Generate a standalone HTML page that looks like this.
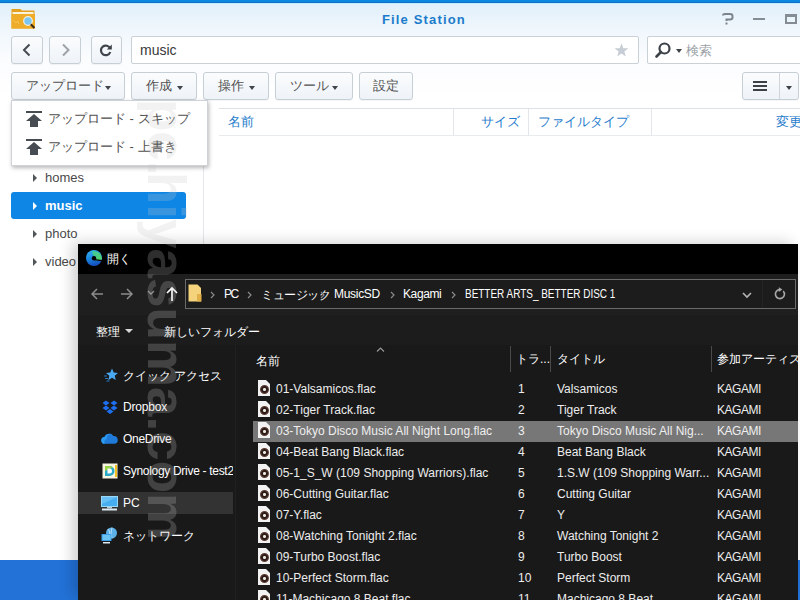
<!DOCTYPE html>
<html><head><meta charset="utf-8">
<style>
*{margin:0;padding:0;box-sizing:border-box}
html,body{width:800px;height:600px;overflow:hidden;background:#2272d8;font-family:"Liberation Sans",sans-serif}
.a{position:absolute;white-space:nowrap}
#fs{position:absolute;left:0;top:0;width:800px;height:560px;background:linear-gradient(#ddeefa 0px,#eef6fc 25px,#fbfcfe 60px,#fff 100px);overflow:hidden}
#topbar{left:0;top:0;width:800px;height:4px;background:linear-gradient(#0a86e0 0,#0a86e0 2px,#0b6fc4 2px,#0b6fc4 3px,#bfeefe 3px,#bfeefe 4px)}
.title{left:382px;top:12px;font-weight:bold;font-size:13px;letter-spacing:1.15px;color:#1b7bcb}
.btn{position:absolute;border:1px solid #c6ced6;border-radius:3px;background:linear-gradient(#fbfcfd,#eef3f8);box-shadow:0 1px 0 rgba(0,0,0,.04)}
.tb{top:72px;height:28px;font-size:13px;color:#505050;line-height:26px;text-align:left;padding-left:14px;white-space:nowrap}
.caret{position:absolute;top:13px;width:0;height:0;border-left:3.5px solid transparent;border-right:3.5px solid transparent;border-top:4px solid #3f454b}
.input{position:absolute;background:#fff;border:1px solid #c9d0d6;border-radius:2px}
.tree{font-size:13px;color:#4a4a4a}
.tri{position:absolute;width:0;height:0;border-top:4px solid transparent;border-bottom:4px solid transparent;border-left:4px solid #50555a}
.hdr{font-size:13px;color:#1f7ccc;top:113px}
.vline{position:absolute;width:1px;background:#e2e6ea}
#dd{left:11px;top:100px;width:197px;height:66px;background:#fff;border:1px solid #cfd3d7;box-shadow:1px 2px 4px rgba(0,0,0,.28)}
.mi{position:absolute;left:36px;font-size:13px;color:#505050}
/* explorer */
#ex{left:78px;top:244px;width:720px;height:356px;background:#191919;overflow:hidden;box-shadow:-6px -2px 14px -1px rgba(0,0,0,.2)}
.w{color:#fff;font-size:12px}
.row{position:absolute;left:175px;width:545px;height:21px;font-size:12px;color:#ededed;line-height:21px}
.row span{position:absolute;top:0}
.row .k{left:464px;letter-spacing:-0.45px}
.fi{position:absolute;left:5px;top:1px;width:12px;height:16px;background:#f2f2f2;clip-path:polygon(0 0,8px 0,12px 4px,12px 16px,0 16px)}
.fi:after{content:"";position:absolute;left:1.5px;top:4.5px;width:9px;height:9px;border-radius:50%;background:radial-gradient(circle,#f0e8e0 0 1.2px,#2a1c18 1.8px 3px,#5a3a30 3.5px 4.5px,transparent 4.6px)}
.nav{position:absolute;left:26px;font-size:12px;color:#fff}
.wm{position:absolute;transform-origin:0 0;transform:rotate(90deg);font-size:53px;font-weight:bold;color:rgb(200,200,200);opacity:.23;white-space:nowrap;line-height:62px}
</style></head><body>
<div id="fs">
  <div class="a" id="topbar"></div>
  <!-- folder icon -->
  <svg class="a" style="left:11px;top:8px" width="25" height="22" viewBox="0 0 25 22">
    <path d="M0.5 1h9l1.5 1.5h12.5v18H0.5z" fill="#e4a020"/>
    <path d="M1.5 4h21v2h-21z" fill="#fbf2dc"/>
    <path d="M0.5 6h23.5v14.5H0.5z" fill="#eeac28"/>
    <path d="M2 12l3 3 2-2 1 3" fill="none" stroke="#f6c860" stroke-width=".8"/>
    <circle cx="17" cy="13" r="4.3" fill="#7cc6f4" stroke="#f4f0e0" stroke-width="1.2"/>
    <path d="M19.8 16.2l3.6 3.8" stroke="#3a2a1a" stroke-width="2"/>
  </svg>
  <div class="a title">File Station</div>
  <!-- window controls -->
  <svg class="a" style="left:722px;top:13px" width="12" height="12" viewBox="0 0 12 12"><path d="M1 2.5Q1 1 3 1h5q2.5 0 2.5 2.2v1.3q0 2-2.5 2H4.5v1.5" fill="none" stroke="#7c838b" stroke-width="2"/><path d="M3.5 9.5h2v2h-2z" fill="#7c838b"/></svg>
  <div class="a" style="left:753px;top:18px;width:12px;height:2px;background:#858c94"></div>
  <div class="a" style="left:785px;top:14px;width:12px;height:10px;border:2px solid #858c94;border-top-width:3px"></div>

  <!-- nav buttons -->
  <div class="btn" style="left:11px;top:36px;width:32px;height:28px"></div>
  <svg class="a" style="left:22px;top:43px" width="10" height="14"><path d="M7.5 1.5L2 7l5.5 5.5" fill="none" stroke="#464b51" stroke-width="2"/></svg>
  <div class="btn" style="left:49px;top:36px;width:32px;height:28px"></div>
  <svg class="a" style="left:61px;top:43px" width="10" height="14"><path d="M2 1.5L7.5 7 2 12.5" fill="none" stroke="#9ea3a8" stroke-width="2"/></svg>
  <div class="btn" style="left:91px;top:36px;width:31px;height:28px"></div>
  <svg class="a" style="left:98px;top:42px" width="16" height="16" viewBox="0 0 16 16"><path d="M12.2 6.5A4.8 4.8 0 1 0 12.3 10" fill="none" stroke="#3f444a" stroke-width="2.2"/><path d="M13.8 2.5v5h-5z" fill="#3f444a"/></svg>

  <div class="input" style="left:131px;top:36px;width:508px;height:28px"></div>
  <div class="a" style="left:140px;top:42px;font-size:14px;color:#383838">music</div>
  <svg class="a" style="left:614px;top:43px" width="15" height="14" viewBox="0 0 15 14"><path d="M7.5 0.3l1.75 4.9 5.2.15-4.1 3.2 1.45 5L7.5 10.6 3.2 13.55l1.45-5L.55 5.35l5.2-.15z" fill="#c6cdd4"/></svg>

  <div class="input" style="left:647px;top:36px;width:160px;height:28px"></div>
  <svg class="a" style="left:654px;top:41px" width="18" height="18" viewBox="0 0 18 18"><circle cx="10.5" cy="7.5" r="5" fill="none" stroke="#3d4248" stroke-width="2.2"/><path d="M7 11l-4.5 4.5" stroke="#3d4248" stroke-width="2.6" stroke-linecap="round"/></svg>
  <div class="a" style="left:676px;top:49px;width:0;height:0;border-left:3px solid transparent;border-right:3px solid transparent;border-top:4px solid #3d4248"></div>
  <div class="a" style="left:686px;top:42px;font-size:13px;color:#9aa0a6">検索</div>

  <!-- toolbar -->
  <div class="btn tb" style="left:11px;width:114px">アップロード<span class="caret" style="left:93px"></span></div>
  <div class="btn tb" style="left:131px;width:66px">作成<span class="caret" style="left:45px"></span></div>
  <div class="btn tb" style="left:203px;width:66px">操作<span class="caret" style="left:45px"></span></div>
  <div class="btn tb" style="left:275px;width:78px">ツール<span class="caret" style="left:56px"></span></div>
  <div class="btn tb" style="left:359px;width:54px;text-align:center;padding-left:0">設定</div>
  <div class="btn" style="left:742px;top:72px;width:57px;height:28px"></div>
  <div class="a" style="left:779px;top:73px;width:1px;height:26px;background:#cfd5db"></div>
  <div class="a" style="left:753px;top:81px;width:14px;height:2px;background:#3d4248;box-shadow:0 4px 0 #3d4248,0 8px 0 #3d4248"></div>
  <div class="a" style="left:786px;top:86px;width:0;height:0;border-left:3.5px solid transparent;border-right:3.5px solid transparent;border-top:4px solid #3d4248"></div>

  <!-- left panel border -->
  <div class="a" style="left:203px;top:100px;width:1px;height:460px;background:#e4e7ea"></div>
  <!-- list header -->
  <div class="a" style="left:219px;top:108px;width:600px;height:1px;background:#dde2e6"></div>
  <div class="a" style="left:219px;top:135px;width:600px;height:1px;background:#e8ebee"></div>
  <div class="vline" style="left:453px;top:109px;height:26px"></div>
  <div class="vline" style="left:528px;top:109px;height:26px"></div>
  <div class="vline" style="left:651px;top:109px;height:26px"></div>
  <div class="a hdr" style="left:228px">名前</div>
  <div class="a hdr" style="right:280px">サイズ</div>
  <div class="a hdr" style="left:538px">ファイルタイプ</div>
  <div class="a hdr" style="left:776px">変更日</div>

  <!-- tree -->
  <div class="tri" style="left:33px;top:174px"></div>
  <div class="a tree" style="left:45px;top:170px">homes</div>
  <div class="a" style="left:11px;top:192px;width:175px;height:27px;background:#0d86e6;border-radius:3px"></div>
  <div class="tri" style="left:33px;top:202px;border-left-color:#fff"></div>
  <div class="a tree" style="left:45px;top:198px;color:#fff;font-weight:bold">music</div>
  <div class="tri" style="left:33px;top:230px"></div>
  <div class="a tree" style="left:45px;top:226px">photo</div>
  <div class="tri" style="left:33px;top:258px"></div>
  <div class="a tree" style="left:45px;top:254px">video</div>

  <!-- dropdown -->
  <div class="a" id="dd">
    <svg class="a" style="left:14px;top:9px" width="18" height="18" viewBox="0 0 18 18"><path d="M0 1h16v2H0z" fill="#474c52"/><path d="M8 4l8 7h-4v6H4v-6H0z" fill="#474c52"/></svg>
    <div class="mi" style="top:9px">アップロード - スキップ</div>
    <svg class="a" style="left:14px;top:37px" width="18" height="18" viewBox="0 0 18 18"><path d="M0 1h16v2H0z" fill="#474c52"/><path d="M8 4l8 7h-4v6H4v-6H0z" fill="#474c52"/></svg>
    <div class="mi" style="top:37px">アップロード - 上書き</div>
  </div>
</div>

<!-- explorer window -->
<div id="ex" class="a">
  <div class="a" style="left:0;top:0;width:720px;height:30px;background:#000"></div>
  <svg class="a" style="left:7px;top:5px" width="18" height="18" viewBox="0 0 18 18">
    <defs>
      <linearGradient id="eg1" x1="0" y1="0" x2="0.3" y2="1"><stop offset="0" stop-color="#3ab4f2"/><stop offset=".55" stop-color="#1b86e0"/><stop offset="1" stop-color="#1552c0"/></linearGradient>
      <linearGradient id="eg2" x1="0" y1="0" x2="1" y2="1"><stop offset="0" stop-color="#3cc8a0"/><stop offset="1" stop-color="#58d068"/></linearGradient>
    </defs>
    <circle cx="9" cy="9" r="8" fill="url(#eg1)"/>
    <path d="M7 2.2A8 8 0 0 1 17 9.8Q16.5 12 14 11.6L9.8 11.2A2.6 2.6 0 0 0 8 6.5Q7.5 4 7 2.2z" fill="url(#eg2)"/>
    <circle cx="9" cy="9.3" r="2.2" fill="#000"/>
    <path d="M9.2 10.7L16.8 11.6" stroke="#000" stroke-width="1.3"/>
  </svg>
  <div class="a w" style="left:29px;top:7px">開く</div>

  <!-- nav bar -->
  <div class="a" style="left:0;top:30px;width:720px;height:41px;background:#1f1f1f"></div>
  <svg class="a" style="left:12px;top:43px" width="14" height="14" viewBox="0 0 14 14"><path d="M13 7H2M7 2L2 7l5 5" fill="none" stroke="#8c8c8c" stroke-width="1.5"/></svg>
  <svg class="a" style="left:42px;top:43px" width="14" height="14" viewBox="0 0 14 14"><path d="M1 7h11M7 2l5 5-5 5" fill="none" stroke="#8c8c8c" stroke-width="1.5"/></svg>
  <svg class="a" style="left:69px;top:46px" width="8" height="6" viewBox="0 0 8 6"><path d="M1 1l3 3 3-3" fill="none" stroke="#8c8c8c" stroke-width="1.3"/></svg>
  <svg class="a" style="left:88px;top:42px" width="12" height="16" viewBox="0 0 12 16"><path d="M6 15V2M1 7l5-5 5 5" fill="none" stroke="#fff" stroke-width="1.7"/></svg>
  <div class="a" style="left:107px;top:35px;width:611px;height:30px;border:1px solid #6a6a6a;background:#1c1c1c"></div>
  <svg class="a" style="left:110px;top:40px" width="14" height="18" viewBox="0 0 14 18"><path d="M0.5 0.5h9l3.5 3.5v13.5H0.5z" fill="#f5d27c"/><path d="M9 10h4.5v7.5H9z" fill="#e2b049"/></svg>
  <div class="a" style="left:0;top:43px;font-size:12px;color:#fff">
    <svg class="a" style="left:132px;top:4px" width="5" height="8" viewBox="0 0 5 8"><path d="M1 1l3 3-3 3" fill="none" stroke="#8a8a8a" stroke-width="1.2"/></svg>
    <span class="a" style="left:146px;letter-spacing:-1.5px">PC</span>
    <svg class="a" style="left:169px;top:4px" width="5" height="8" viewBox="0 0 5 8"><path d="M1 1l3 3-3 3" fill="none" stroke="#8a8a8a" stroke-width="1.2"/></svg>
    <span class="a" style="left:183px;letter-spacing:-0.5px">ミュージック</span>
    <svg class="a" style="left:242px;top:4px" width="5" height="8" viewBox="0 0 5 8"><path d="M1 1l3 3-3 3" fill="none" stroke="#8a8a8a" stroke-width="1.2"/></svg>
    <span class="a" style="left:256px;letter-spacing:-0.3px">MusicSD</span>
    <svg class="a" style="left:312px;top:4px" width="5" height="8" viewBox="0 0 5 8"><path d="M1 1l3 3-3 3" fill="none" stroke="#8a8a8a" stroke-width="1.2"/></svg>
    <span class="a" style="left:325px;letter-spacing:-0.4px">Kagami</span>
    <svg class="a" style="left:373px;top:4px" width="5" height="8" viewBox="0 0 5 8"><path d="M1 1l3 3-3 3" fill="none" stroke="#8a8a8a" stroke-width="1.2"/></svg>
    <span class="a" style="left:387px;transform:scaleX(.83);transform-origin:0 0">BETTER ARTS_ BETTER DISC 1</span>
  </div>
  <svg class="a" style="left:664px;top:48px" width="10" height="7" viewBox="0 0 10 7"><path d="M1 1l4 4 4-4" fill="none" stroke="#b4b4b4" stroke-width="1.6"/></svg>
  <div class="a" style="left:684px;top:36px;width:1px;height:28px;background:#242424"></div>
  <svg class="a" style="left:695px;top:43px" width="14" height="14" viewBox="0 0 14 14"><path d="M10.2 4A4.5 4.5 0 1 1 7 2.6" fill="none" stroke="#a8a8a8" stroke-width="1.6"/><path d="M5.8 0.2L9.4 2.6 5.8 5z" fill="#a8a8a8"/></svg>

  <!-- command bar -->
  <div class="a" style="left:0;top:71px;width:720px;height:30px;background:#1c1c1c"></div>
  <div class="a w" style="left:18px;top:80px">整理</div>
  <div class="a" style="left:47px;top:85px;width:0;height:0;border-left:4.5px solid transparent;border-right:4.5px solid transparent;border-top:4.5px solid #d8d8d8"></div>
  <div class="a w" style="left:86px;top:80px">新しいフォルダー</div>

  <!-- left pane -->
  <div class="a" style="left:157px;top:101px;width:1px;height:260px;background:#202020"></div>
  <div class="a" style="left:0;top:101px;width:155px;height:260px;overflow:hidden">
    <div class="a" style="left:0;top:147px;width:155px;height:22px;background:#333"></div>
    <svg class="a" style="left:26px;top:23px" width="14" height="14" viewBox="0 0 14 14"><path d="M8 0.5l1.7 4.1 4.3.3-3.3 2.9 1.1 4.3L8 9.8 4.3 12.2 5.3 7.8 2 4.9l4.3-.3z" fill="#4aa8f0"/><path d="M0 8h3M1 10.5h3M2.5 13h3" stroke="#2a78c8" stroke-width="1"/></svg>
    <div class="nav" style="left:45px;top:23px">クイック アクセス</div>
    <svg class="a" style="left:24px;top:55px" width="16" height="14" viewBox="0 0 16 14"><path d="M4 0.5L0.5 3 4 5.5 7.5 3zM12 0.5L8.5 3 12 5.5 15.5 3zM4 5.5L0.5 8 4 10.5 7.5 8zM12 5.5L8.5 8 12 10.5 15.5 8zM8 9L4.5 11.5 8 14l3.5-2.5z" fill="#1e6ff0"/></svg>
    <div class="nav" style="left:45px;top:55px;letter-spacing:-0.2px">Dropbox</div>
    <svg class="a" style="left:23px;top:88px" width="17" height="11" viewBox="0 0 17 11"><path d="M4 10.8a3.4 3.4 0 0 1-.6-6.8A5 5 0 0 1 12.4 3a3.9 3.9 0 0 1 .8 7.8z" fill="#1f7ad8"/><path d="M4 10.8a3.4 3.4 0 0 1-.6-6.8A5 5 0 0 1 9 1.2 4 4 0 0 0 6 6 3 3 0 0 0 4 10.8z" fill="#2b9af0"/></svg>
    <div class="nav" style="left:45px;top:87px;letter-spacing:-0.3px">OneDrive</div>
    <svg class="a" style="left:24px;top:118px" width="16" height="16" viewBox="0 0 16 16"><path d="M0.5 0.5h15v15H0.5z" fill="#f8f4e0"/><path d="M3 3h4.5a5 5 0 0 1 0 10H3z" fill="#2aa9c8"/><path d="M3 3h4.5a5 5 0 0 1 3.5 1.5L3 8z" fill="#9ad24a"/><path d="M5.5 5.5h2a2.5 2.5 0 0 1 0 5h-2z" fill="#fff"/><path d="M13 2h2v12h-2z" fill="#f0c020"/></svg>
    <div class="nav" style="left:45px;top:119px;letter-spacing:-0.3px">Synology Drive - test2</div>
    <svg class="a" style="left:23px;top:151px" width="17" height="15" viewBox="0 0 17 15"><path d="M0 0h17v11H0z" fill="#9ad8f8"/><path d="M1 1h15v9H1z" fill="#46aef0"/><path d="M1 1h15L1 8z" fill="#68c0f4"/><path d="M1 12.5h15v2H1z" fill="#dceaf4"/><path d="M6 11h5v1.5H6z" fill="#b8c8d4"/></svg>
    <div class="nav" style="left:45px;top:151px">PC</div>
    <svg class="a" style="left:23px;top:182px" width="17" height="17" viewBox="0 0 17 17"><circle cx="10.5" cy="6" r="5.5" fill="#5cb0e8"/><path d="M7 2q3.5 4 0 8M11 0.5q-2 5.5 0 11" fill="none" stroke="#c8e6f8" stroke-width=".8"/><path d="M0.5 7h10v7h-10z" fill="#3a9ee8"/><path d="M1.5 8h8v5h-8z" fill="#6cc4f4"/><path d="M2 15h7v1.5H2z" fill="#dceaf4"/></svg>
    <div class="nav" style="left:45px;top:183px">ネットワーク</div>
  </div>

  <!-- column header -->
  <div class="a w" style="left:178px;top:109px">名前</div>
  <svg class="a" style="left:298px;top:103px" width="9" height="5" viewBox="0 0 9 5"><path d="M1 4.5L4.5 1 8 4.5" fill="none" stroke="#9a9a9a" stroke-width="1.1"/></svg>
  <div class="a" style="left:432px;top:102px;width:1px;height:26px;background:#4a4a4a"></div>
  <div class="a" style="left:472px;top:102px;width:1px;height:26px;background:#4a4a4a"></div>
  <div class="a" style="left:633px;top:102px;width:1px;height:26px;background:#4a4a4a"></div>
  <div class="a w" style="left:438px;top:107px">トラ...</div>
  <div class="a w" style="left:479px;top:107px">タイトル</div>
  <div class="a w" style="left:639px;top:107px">参加アーティスト</div>

  <!-- rows -->
  <div class="a" style="left:0;top:135px;width:720px">
    <div class="row" style="top:0"><i class="fi"></i><span style="left:23px">01-Valsamicos.flac</span><span style="left:265px">1</span><span style="left:304px">Valsamicos</span><span class="k">KAGAMI</span></div>
    <div class="row" style="top:21px"><i class="fi"></i><span style="left:23px">02-Tiger Track.flac</span><span style="left:265px">2</span><span style="left:304px">Tiger Track</span><span class="k">KAGAMI</span></div>
    <div class="row" style="top:42px;background:#777;color:#eee"><i class="fi"></i><span style="left:23px">03-Tokyo Disco Music All Night Long.flac</span><span style="left:265px">3</span><span style="left:304px">Tokyo Disco Music All Nig...</span><span class="k">KAGAMI</span></div>
    <div class="row" style="top:63px"><i class="fi"></i><span style="left:23px">04-Beat Bang Black.flac</span><span style="left:265px">4</span><span style="left:304px">Beat Bang Black</span><span class="k">KAGAMI</span></div>
    <div class="row" style="top:84px"><i class="fi"></i><span style="left:23px">05-1_S_W (109 Shopping Warriors).flac</span><span style="left:265px">5</span><span style="left:304px">1.S.W (109 Shopping Warr...</span><span class="k">KAGAMI</span></div>
    <div class="row" style="top:105px"><i class="fi"></i><span style="left:23px">06-Cutting Guitar.flac</span><span style="left:265px">6</span><span style="left:304px">Cutting Guitar</span><span class="k">KAGAMI</span></div>
    <div class="row" style="top:126px"><i class="fi"></i><span style="left:23px">07-Y.flac</span><span style="left:265px">7</span><span style="left:304px">Y</span><span class="k">KAGAMI</span></div>
    <div class="row" style="top:147px"><i class="fi"></i><span style="left:23px">08-Watching Tonight 2.flac</span><span style="left:265px">8</span><span style="left:304px">Watching Tonight 2</span><span class="k">KAGAMI</span></div>
    <div class="row" style="top:168px"><i class="fi"></i><span style="left:23px">09-Turbo Boost.flac</span><span style="left:265px">9</span><span style="left:304px">Turbo Boost</span><span class="k">KAGAMI</span></div>
    <div class="row" style="top:189px"><i class="fi"></i><span style="left:23px">10-Perfect Storm.flac</span><span style="left:265px">10</span><span style="left:304px">Perfect Storm</span><span class="k">KAGAMI</span></div>
    <div class="row" style="top:210px"><i class="fi"></i><span style="left:23px">11-Machicago 8 Beat.flac</span><span style="left:265px">11</span><span style="left:304px">Machicago 8 Beat</span><span class="k">KAGAMI</span></div>
  </div>
</div>

<div class="wm" style="left:197px;top:99px">pc.</div><div class="wm" style="left:197px;top:172px">hiyasuma.com</div>
</body></html>
